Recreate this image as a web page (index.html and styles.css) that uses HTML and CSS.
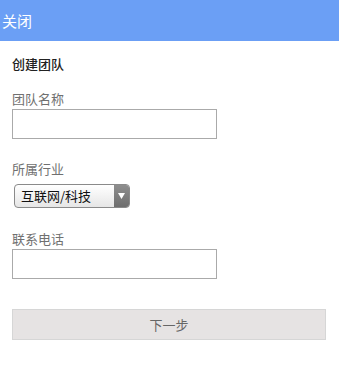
FILE: index.html
```html
<!DOCTYPE html>
<html>
<head>
<meta charset="utf-8">
<link rel="stylesheet" href="styles.css">
</head>
<body>
<div class="header"><span class="close">关闭</span></div>
<div class="content">
  <div class="title">创建团队</div>
  <div class="field field-name">
    <div class="label">团队名称</div>
    <div class="input"></div>
  </div>
  <div class="field field-industry">
    <div class="label">所属行业</div>
    <div class="select"><span class="select-text">互联网/科技</span><span class="select-arrow"><svg width="7" height="6" viewBox="0 0 7 6"><path d="M0 0H7L3.5 6Z" fill="#fff"/></svg></span></div>
  </div>
  <div class="field field-phone">
    <div class="label">联系电话</div>
    <div class="input"></div>
  </div>
  <div class="button">下一步</div>
</div>
</body>
</html>
```
FILE: styles.css
```css
html, body { margin: 0; padding: 0; background: #fff; }
body { font-family: "Noto Sans CJK SC", "Liberation Sans", sans-serif; width: 339px; height: 386px; overflow: hidden; }
.header { height: 41px; background: #6b9ff5; display: flex; align-items: center; padding-left: 2px; }
.close { color: #fff; font-size: 15px; line-height: 1; }
.content { padding: 0 12px; }
.title { font-size: 13px; font-weight: 500; color: #222; margin-top: 15px; height: 16px; line-height: 16px; }
.field-name { margin-top: 19px; }
.field-industry { margin-top: 22px; }
.field-phone { margin-top: 23px; }
.label { font-size: 13px; color: #707070; line-height: 16px; height: 16px; }
.input { margin-top: 2px; width: 205px; height: 30px; border: 1px solid #aaa; box-sizing: border-box; background: #fff; }
.select { margin-top: 7px; margin-left: 2px; width: 116px; height: 24px; border: 1px solid #8a8a8a; border-radius: 4px; display: flex; box-sizing: border-box; overflow: hidden; background: linear-gradient(#ffffff, #e6e6e6); }
.select-text { flex: 1; font-size: 13px; color: #111; line-height: 22px; padding-left: 6px; }
.select-arrow { width: 15px; background: linear-gradient(#8e8e8e, #6e6e6e); display: flex; align-items: center; justify-content: center; }
.button { margin-top: 30px; width: 314px; height: 31px; box-sizing: border-box; border: 1px solid #d6d6d6; background: #e6e3e3; color: #666; font-size: 13px; display: flex; align-items: center; justify-content: center; }
```
